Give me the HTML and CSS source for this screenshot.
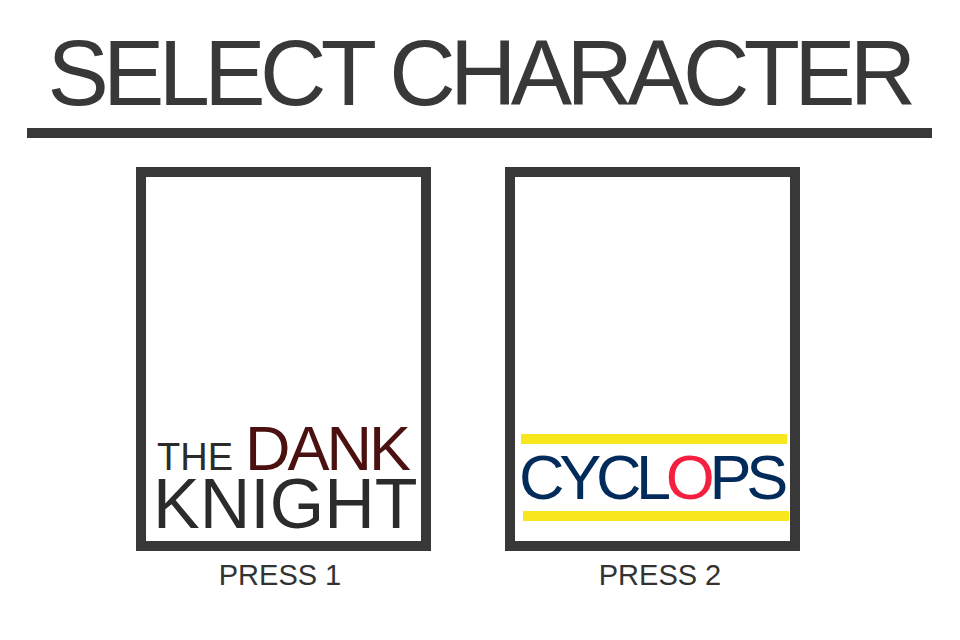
FILE: index.html
```html
<!DOCTYPE html>
<html>
<head>
<meta charset="utf-8">
<link rel="stylesheet" href="styles.css">
</head>
<body>
<div class="page">
  <h1 class="title">SELECT CHARACTER</h1>
  <div class="rule"></div>
  <div class="cards">
    <div class="col">
      <div class="card">
        <div class="dank-logo">
          <div class="dank-top"><span class="the">THE</span><span class="dank">DANK</span></div>
          <div class="knight">KNIGHT</div>
        </div>
      </div>
      <div class="label label-1">PRESS 1</div>
    </div>
    <div class="col">
      <div class="card">
        <div class="cyc-logo">
          <div class="ybar ybar-top"></div>
          <div class="cyc">CYCL<span class="cyc-o">O</span>PS</div>
          <div class="ybar ybar-bottom"></div>
        </div>
      </div>
      <div class="label label-2">PRESS 2</div>
    </div>
  </div>
</div>
</body>
</html>
```
FILE: styles.css
```css
html, body {
  margin: 0;
  padding: 0;
  background: #ffffff;
}
body {
  font-family: "Liberation Sans", Arial, sans-serif;
  width: 960px;
  height: 640px;
  overflow: hidden;
}
.page {
  display: flex;
  flex-direction: column;
}
.title {
  margin: 27px 0 0 0;
  font-size: 92px;
  line-height: 92px;
  font-weight: normal;
  letter-spacing: -5.7px;
  color: #383838;
  text-align: center;
  padding-right: 2px;
}
.rule {
  height: 10px;
  margin: 9px 28px 0 27px;
  background: #383838;
}
.cards {
  display: flex;
  gap: 74px;
  margin-top: 29px;
  padding-left: 136px;
}
.col {
  display: flex;
  flex-direction: column;
  align-items: center;
  width: 295px;
}
.card {
  box-sizing: border-box;
  width: 295px;
  height: 384px;
  border: 10px solid #383838;
  display: flex;
  flex-direction: column;
  justify-content: flex-end;
}
.label {
  margin-top: 10px;
  font-size: 29px;
  line-height: 29px;
  color: #333333;
}
.label-1 {
  margin-left: -7px;
}
.label-2 {
  margin-left: 15px;
}
.dank-logo {
  display: flex;
  flex-direction: column;
  padding: 0 0 9px 0;
}
.dank-top {
  display: flex;
  align-items: baseline;
  padding-left: 11px;
}
.the {
  font-size: 38px;
  line-height: 30px;
  color: #2b2b2b;
}
.dank {
  font-size: 63px;
  line-height: 50px;
  color: #4b1010;
  letter-spacing: -3px;
  margin-left: 12px;
}
.knight {
  font-size: 70px;
  line-height: 56px;
  color: #2b2b2b;
  margin-top: 3px;
  padding-left: 7px;
}
.cyc-logo {
  display: flex;
  flex-direction: column;
  padding-bottom: 20px;
}
.ybar {
  height: 10px;
  width: 266px;
  background: #f8e71c;
}
.ybar-top {
  margin-left: 6px;
}
.ybar-bottom {
  margin-left: 8px;
  margin-top: 2px;
}
.cyc {
  font-size: 63px;
  line-height: 63px;
  letter-spacing: -5.3px;
  color: #012b5a;
  padding-left: 4px;
  margin-top: 2px;
}
.cyc-o {
  color: #f5203f;
}
```
